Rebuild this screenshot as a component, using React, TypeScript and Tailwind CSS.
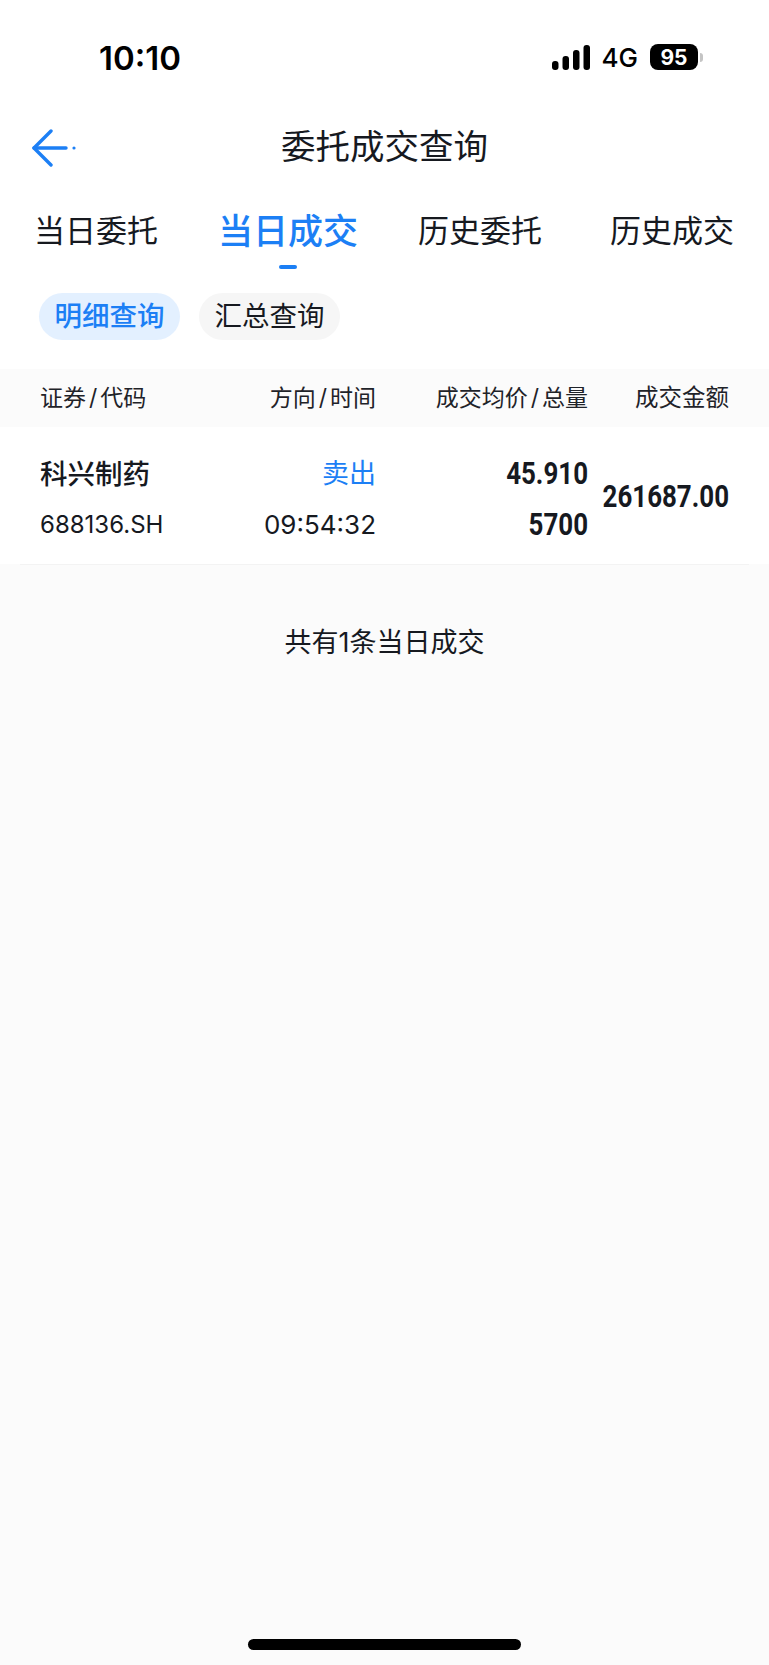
const sans = "font-['Inter','Noto_Sans_CJK_SC',sans-serif]";

function Signal() {
  return (
    <svg width="38" height="25" viewBox="0 0 38 25" className="text-black">
      <rect x="0" y="16" width="6.5" height="9" rx="3" fill="currentColor" />
      <rect x="10.5" y="11" width="6.5" height="14" rx="3" fill="currentColor" />
      <rect x="21" y="5" width="6.5" height="20" rx="3" fill="currentColor" />
      <rect x="31.5" y="0" width="6.5" height="25" rx="3" fill="currentColor" />
    </svg>
  );
}

function BackArrow() {
  return (
    <svg width="46" height="38" viewBox="0 0 46 38" fill="none" stroke="#1c7ff5" strokeWidth="3.4" strokeLinecap="round" strokeLinejoin="round">
      <path d="M20 2 L3 19 L20 36" />
      <path d="M3 19 H35" />
      <circle cx="43" cy="19" r="0.8" strokeWidth="1.6" />
    </svg>
  );
}

const numFont = "font-['Roboto',sans-serif] origin-right scale-x-[0.81]";

function Slashed({ a, b }: { a: string; b: string }) {
  return (
    <>
      {a}
      <span className="mx-[3px]">/</span>
      {b}
    </>
  );
}

export default function App() {
  return (
    <div className={`${sans} flex h-[1665px] w-[769px] flex-col overflow-hidden bg-[#fbfbfb] text-[#16191f]`}>
      <div className="bg-white">
        <div className="flex h-[114px] items-center pl-[99px] pr-[66px]">
          <span className="pt-[4px] font-['Inter',sans-serif] text-[33px] font-semibold text-black">10:10</span>
          <div className="ml-auto flex items-center">
            <Signal />
            <span className="ml-[12px] font-['Inter',sans-serif] text-[26px] font-medium text-black">4G</span>
            <div className="ml-[12px] flex h-[26px] w-[48px] items-center justify-center rounded-[8px] bg-black font-['Inter',sans-serif] text-[21px] font-bold leading-none text-white">95</div>
            <div className="ml-[2px] h-[9px] w-[3px] rounded-r-full bg-[#c4c4c4]" />
          </div>
        </div>

        <div className="relative flex h-[68px] items-center justify-center pb-[2px] text-[34.5px]">
          <div className="absolute left-[31px] top-[15px]"><BackArrow /></div>
          委托成交查询
        </div>

        <div className="flex h-[96px] items-center pl-[34px] pt-[2px] text-[31px]">
          <span>当日委托</span>
          <div className="relative ml-[60px] text-[35px] font-medium text-[#1c7ff5]">
            当日成交
            <div className="absolute left-[61px] top-[60px] h-[4px] w-[18px] rounded-full bg-[#1c7ff5]" />
          </div>
          <span className="ml-[60px]">历史委托</span>
          <span className="ml-[68px]">历史成交</span>
        </div>

        <div className="flex gap-[19px] pb-[29px] pl-[39px] pt-[15px] text-[27.5px]">
          <div className="flex h-[47px] w-[141px] items-center justify-center rounded-full bg-[#e3f0ff] font-medium text-[#1c7ff5]">明细查询</div>
          <div className="flex h-[47px] w-[141px] items-center justify-center rounded-full bg-[#f6f6f6]">汇总查询</div>
        </div>
      </div>

      <div className="flex h-[58px] items-center pl-[40px] pr-[40px] text-[23px] text-[#1f2329]">
        <span className="w-[200px] shrink-0"><Slashed a="证券" b="代码" /></span>
        <span className="w-[136px] shrink-0 text-right"><Slashed a="方向" b="时间" /></span>
        <span className="w-[212px] shrink-0 text-right"><Slashed a="成交均价" b="总量" /></span>
        <span className="flex-1 text-right text-[23.5px]">成交金额</span>
      </div>

      <div className="bg-white">
        <div className="flex h-[137px] items-center pl-[40px] pr-[40px]">
          <div className="mt-[8px] flex w-[200px] shrink-0 flex-col gap-[15px]">
            <span className="text-[27.5px] font-medium leading-[36px]">科兴制药</span>
            <span className="font-['Inter',sans-serif] text-[24px] leading-[36px]">688136.SH</span>
          </div>
          <div className="mt-[8px] flex w-[136px] shrink-0 flex-col gap-[15px] text-right">
            <span className="text-[27px] leading-[36px] text-[#1c7ff5]">卖出</span>
            <span className="font-['Inter',sans-serif] text-[26px] leading-[36px]">09:54:32</span>
          </div>
          <div className={`${numFont} mt-[6px] flex w-[212px] shrink-0 flex-col gap-[15px] text-right text-[32px] font-bold leading-[36px]`}>
            <span>45.910</span>
            <span>5700</span>
          </div>
          <div className={`${numFont} flex min-w-0 flex-1 justify-end text-[32px] font-bold leading-[36px]`}>
            <span className="shrink-0">261687.00</span>
          </div>
        </div>
      </div>
      <div className="mx-[20px] h-px bg-[#f3f3f3]" />

      <div className="mt-[60px] text-center text-[27px] leading-[36px]">共有1条当日成交</div>

      <div className="mb-[15px] mt-auto h-[11px] w-[273px] self-center rounded-full bg-black" />
    </div>
  );
}
